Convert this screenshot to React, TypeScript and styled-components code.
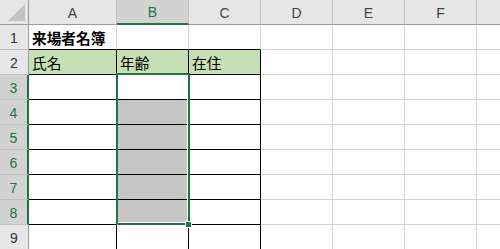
import styled, { createGlobalStyle } from 'styled-components'

const GlobalStyle = createGlobalStyle`
  html, body {
    margin: 0;
    padding: 0;
    background: #FFFFFF;
    overflow: hidden;
  }
`

const GREEN = '#217346'
const GRID = '#d4d4d4'
const HEAD_LINE = '#9b9b9b'
const HEAD_SEP = '#c0c0c0'

const ROW_HEADER_W = 29
const ROW_H = 25

type Col = { key: string, width: number, label?: string }

// the last column only peeks in at the right edge, its letter lies off screen
const COLS: Col[] = [
  { key: 'A', width: 88, label: 'A' },
  { key: 'B', width: 72, label: 'B' },
  { key: 'C', width: 72, label: 'C' },
  { key: 'D', width: 72, label: 'D' },
  { key: 'E', width: 72, label: 'E' },
  { key: 'F', width: 72, label: 'F' },
  { key: 'G', width: 72 },
]

const ROWS = [1, 2, 3, 4, 5, 6, 7, 8, 9]

const CELLS: Record<string, { text: string, bold?: boolean, fill?: string }> = {
  A1: { text: '来場者名簿', bold: true },
  A2: { text: '氏名', fill: '#c6e0b4' },
  B2: { text: '年齢', fill: '#c6e0b4' },
  C2: { text: '在住', fill: '#c6e0b4' },
}

const TABLE_COLS = ['A', 'B', 'C']
const TABLE_FIRST_ROW = 2
const SEL_COL = 'B'
const SEL_FROM = 3
const SEL_TO = 8

const Sheet = styled.div<{ $cols: string }>`
  position: relative;
  display: grid;
  grid-template-columns: ${p => p.$cols};
  grid-auto-rows: ${ROW_H}px;
  width: 500px;
  height: 249px;
  overflow: hidden;
`

const Corner = styled.div`
  box-sizing: border-box;
  background: #e6e6e6;
  border-right: 1px solid ${HEAD_LINE};
  border-bottom: 1px solid ${HEAD_LINE};
  display: flex;
  align-items: flex-end;
  justify-content: flex-end;
  padding: 0 3px 3px 0;
`

const CornerTriangle = styled.div`
  width: 17px;
  height: 17px;
  background: #c3c3c3;
  clip-path: polygon(100% 0, 100% 100%, 0 100%);
`

const ColHeader = styled.div<{ $selected: boolean }>`
  box-sizing: border-box;
  display: flex;
  align-items: center;
  justify-content: center;
  background: ${p => (p.$selected ? '#d2d2d2' : '#e6e6e6')};
  color: ${p => (p.$selected ? GREEN : '#444444')};
  border-right: 1px solid ${HEAD_SEP};
  border-bottom: ${p => (p.$selected ? `2px solid ${GREEN}` : `1px solid ${HEAD_LINE}`)};
  font-family: "Liberation Sans", Arial, sans-serif;
  font-size: 14px;
  padding-top: 1px;
`

const RowHeader = styled.div<{ $selected: boolean }>`
  box-sizing: border-box;
  display: flex;
  align-items: center;
  justify-content: center;
  background: ${p => (p.$selected ? '#d2d2d2' : '#e6e6e6')};
  color: ${p => (p.$selected ? GREEN : '#333333')};
  border-right: ${p => (p.$selected ? `2px solid ${GREEN}` : `1px solid ${HEAD_LINE}`)};
  border-bottom: 1px solid ${HEAD_SEP};
  font-family: "Liberation Sans", Arial, sans-serif;
  font-size: 14px;
  padding-top: 1px;
`

const Cell = styled.div<{ $fill?: string, $bold?: boolean, $right: string, $bottom: string }>`
  box-sizing: border-box;
  display: flex;
  align-items: center;
  padding: 1px 0 0 3px;
  background: ${p => p.$fill || '#FFFFFF'};
  border-right: 1px solid ${p => p.$right};
  border-bottom: 1px solid ${p => p.$bottom};
  font-family: "Noto Sans CJK JP", "Noto Sans", sans-serif;
  font-size: 14.67px;
  font-weight: ${p => (p.$bold ? 700 : 400)};
  color: #000000;
  white-space: nowrap;
  overflow: visible;
`

const SelectionBox = styled.div`
  position: absolute;
  box-sizing: border-box;
  border: 2px solid ${GREEN};
  box-shadow: inset -1px -1px 0 #FFFFFF;
  pointer-events: none;
`

const FillHandle = styled.div`
  position: absolute;
  box-sizing: border-box;
  width: 7px;
  height: 7px;
  background: ${GREEN};
  border: 1px solid #FFFFFF;
`

const App = () => {
  const colTemplate = [ROW_HEADER_W, ...COLS.map(c => c.width)].map(w => `${w}px`).join(' ')

  // selection geometry from the column / row sizes
  const selIndex = COLS.findIndex(c => c.key === SEL_COL)
  const selLeft = ROW_HEADER_W + COLS.slice(0, selIndex).reduce((s, c) => s + c.width, 0) - 1
  const selWidth = COLS[selIndex].width + 2
  const selTop = ROW_H * SEL_FROM - 2
  const selHeight = ROW_H * (SEL_TO - SEL_FROM + 1) + 2

  return (
    <>
      <GlobalStyle />
      <Sheet $cols={colTemplate}>
        <Corner><CornerTriangle /></Corner>
        {COLS.map(c => (
          <ColHeader key={c.key} $selected={c.key === SEL_COL}>{c.label}</ColHeader>
        ))}
        {ROWS.map(r => (
          <>
            <RowHeader key={'h' + r} $selected={r >= SEL_FROM && r <= SEL_TO}>{r}</RowHeader>
            {COLS.map(c => {
              const id = c.key + r
              const data = CELLS[id]
              const inTable = TABLE_COLS.includes(c.key)
              const right = inTable && r >= TABLE_FIRST_ROW ? '#000000' : GRID
              const bottom = inTable && r >= TABLE_FIRST_ROW - 1 ? '#000000' : GRID
              const grey = c.key === SEL_COL && r > SEL_FROM && r <= SEL_TO
              return (
                <Cell
                  key={id}
                  $fill={grey ? '#c6c6c6' : data?.fill}
                  $bold={data?.bold}
                  $right={right}
                  $bottom={bottom}
                >
                  {data?.text}
                </Cell>
              )
            })}
          </>
        ))}
        <SelectionBox style={{ left: selLeft, top: selTop, width: selWidth, height: selHeight }} />
        <FillHandle style={{ left: selLeft + selWidth - 5, top: selTop + selHeight - 4 }} />
      </Sheet>
    </>
  )
}

export default App
